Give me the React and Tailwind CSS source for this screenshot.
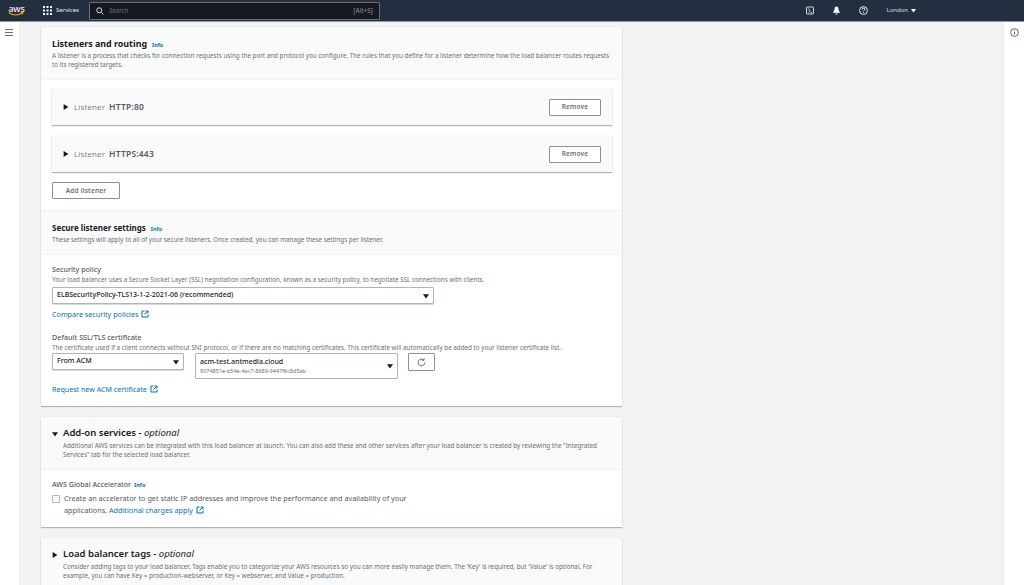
import React from "react";

const ExtIcon = () => (
  <svg viewBox="0 0 16 16" className="w-[8px] h-[8px] inline-block ml-[3px] align-[-1px]" fill="none" stroke="#0073bb" strokeWidth="2">
    <path d="M7 2H2v12h12V9" />
    <path d="M9 2h5v5M14 2L7 9" />
  </svg>
);
const Caret = ({ down }) => (
  <svg viewBox="0 0 10 10" className="w-[6px] h-[6px] shrink-0" fill="#16191f">
    {down ? <path d="M0 2h10L5 9z" /> : <path d="M1 0l8 5-8 5z" />}
  </svg>
);
const Info = () => <span className="text-[5.5px] font-bold text-[#0073bb] ml-[5px]">Info</span>;
const Btn = ({ children, className }) => (
  <div className={"border border-[#879596] rounded-[1px] bg-white flex items-center justify-center text-[6.5px] font-semibold text-[#687078] tracking-[0.2px] " + className}>
    {children}
  </div>
);
const Select = ({ children, className }) => (
  <div className={"border border-[#aab7b8] rounded-[1px] bg-white shadow-[0_1px_0_#d5dbdb] flex items-center justify-between pl-[4px] pr-[4px] text-[#16191f] " + className}>
    <div>{children}</div>
    <Caret down />
  </div>
);
const Listener = ({ name }) => (
  <div className="h-[36px] ml-[11px] mr-[10px] mb-[11px] bg-[#fafafa] shadow-[0_1px_1px_#aab7b8,0_0_1px_#d5dbdb] flex items-center pl-[11px] pr-[11px]">
    <Caret />
    <span className="text-[7.800px] text-[#7a8288] ml-[5px] tracking-[0.2px] pt-[1px]">Listener</span>
    <span className="text-[8.500px] font-semibold text-[#545b64] ml-[4px] tracking-[0.2px] pt-[1px]">{name}</span>
    <Btn className="ml-auto w-[52px] h-[17px]">Remove</Btn>
  </div>
);
const Card = ({ children, className }) => (
  <div className={"w-[581px] bg-white shadow-[0_1px_1px_#aab7b8,0_0_1px_#d5dbdb] " + className}>{children}</div>
);

export default function App() {
  return (
    <div className="w-[1024px] h-[585px] overflow-hidden flex flex-col bg-[#f2f3f3] text-[#16191f]" style={{ fontFamily: '"Noto Sans", sans-serif' }}>
      <header className="h-[22px] shrink-0 bg-[#232f3e] border-b border-[#8d99a8] flex items-center text-white">
        <div className="w-[33px] flex flex-col items-center">
          <span className="text-[9px] font-medium leading-[7px] tracking-[-0.2px] text-[#eaeded]">aws</span>
          <svg viewBox="0 0 20 5" className="w-[16px] h-[4px] -ml-[1px]" fill="none" stroke="#ff9900" strokeWidth="1.3"><path d="M1 1c5 3.500 12 3.500 17 0" /><path d="M16 .8l2.600-.2-.6 2.400" /></svg>
        </div>
        <svg viewBox="0 0 9 9" className="w-[9px] h-[9px] ml-[10px]" fill="#fff">
          <path d="M0 0h2v2H0zM3.500 0h2v2h-2zM7 0h2v2H7zM0 3.500h2v2H0zM3.500 3.500h2v2h-2zM7 3.500h2v2H7zM0 7h2v2H0zM3.500 7h2v2h-2zM7 7h2v2H7z" />
        </svg>
        <span className="text-[6px] ml-[4px] text-[#eaeded] w-[28px]">Services</span>
        <div className="w-[291px] h-[18px] ml-[5px] bg-[#16191f] border border-[#687078] rounded-[1px] flex items-center px-[6px]">
          <svg viewBox="0 0 16 16" className="w-[8px] h-[8px]" fill="none" stroke="#eaeded" strokeWidth="1.800"><circle cx="6.500" cy="6.500" r="5" /><path d="M10.500 10.500L15 15" /></svg>
          <span className="text-[6.500px] text-[#687078] italic ml-[5px]">Search</span>
          <span className="text-[6.500px] text-[#879596] ml-auto">[Alt+S]</span>
        </div>
        <div className="ml-auto flex items-center mr-[108px] h-full">
          <div className="w-[27px] flex items-center justify-center">
            <svg viewBox="0 0 16 16" className="w-[8px] h-[9px]" fill="none" stroke="#fff" strokeWidth="1.600"><rect x="1" y="1" width="14" height="14" rx="1" /><path d="M5 4l3 4-3 4M9 12h3" /></svg>
          </div>
          <div className="w-[27px] flex items-center justify-center">
            <svg viewBox="0 0 16 16" className="w-[9px] h-[9px]" fill="#fff"><path d="M8 1c2.500 0 3.500 2 3.500 4.500 0 3 2.500 5 3 6.500H1.500c.5-1.500 3-3.500 3-6.500C4.500 3 5.500 1 8 1zM6 13.500h4a2 2 0 01-4 0z" /></svg>
          </div>
          <div className="w-[27px] flex items-center justify-center">
            <svg viewBox="0 0 16 16" className="w-[9px] h-[9px]" fill="none" stroke="#fff" strokeWidth="1.600"><circle cx="8" cy="8" r="7" /><path d="M5.800 6a2.200 2.200 0 114 1.200c-.8.8-1.800 1-1.800 2.300M8 11v1.500" /></svg>
          </div>
          <div className="flex items-center ml-[9px] text-[6px] text-[#d5dbdb]">
            London
            <svg viewBox="0 0 10 10" className="w-[5px] h-[5px] ml-[3px]" fill="#fff"><path d="M0 2h10L5 9z" /></svg>
          </div>
        </div>
      </header>
      <div className="flex flex-1 min-h-0">
        <aside className="w-[20px] shrink-0 bg-white border-r border-[#eaeded] flex justify-start pl-[5px] pt-[7px]">
          <svg viewBox="0 0 8 7" className="w-[8px] h-[7px]" fill="none" stroke="#687078" strokeWidth="1"><path d="M0 .5h8M0 3.500h8M0 6.500h8" /></svg>
        </aside>
        <main className="flex-1 pl-[21px] pt-[5px] flex flex-col gap-[11px] min-w-0">
          <Card className="shrink-0">
            <div className="h-[53px] bg-[#fafafa] border-b border-[#f2f3f3] px-[11px] pt-[10px]">
              <div className="flex items-baseline leading-[13px]">
                <span className="text-[8.900px] font-bold">Listeners and routing</span><Info />
              </div>
              <p className="text-[6.270px] leading-[9px] text-[#687078] -mt-[1px]">
                A listener is a process that checks for connection requests using the port and protocol you configure. The rules that you define for a listener determine how the load balancer routes requests to its registered targets.
              </p>
            </div>
            <div className="pt-[9px]">
              <Listener name="HTTP:80" />
              <Listener name="HTTPS:443" />
              <Btn className="ml-[11px] w-[68px] h-[17px] -mt-[1px]">Add listener</Btn>
            </div>
            <div className="mt-[11px] h-[45px] bg-[#fafafa] border-y border-[#f2f3f3] px-[11px] pt-[10px]">
              <div className="flex items-baseline leading-[13px]">
                <span className="text-[8px] font-bold">Secure listener settings</span><Info />
              </div>
              <p className="text-[6.270px] leading-[9px] text-[#687078] -mt-[1px]">
                These settings will apply to all of your secure listeners. Once created, you can manage these settings per listener.
              </p>
            </div>
            <div className="px-[11px] pt-[9px] pb-[12px]">
              <div className="text-[7.100px] leading-[10px] font-medium text-[#545b64]">Security policy</div>
              <div className="text-[6.270px] leading-[9px] text-[#687078] mt-[1px]">
                Your load balancer uses a Secure Socket Layer (SSL) negotiation configuration, known as a security policy, to negotiate SSL connections with clients.
              </div>
              <Select className="w-[382px] h-[17px] mt-[3px] font-medium text-[7px]">ELBSecurityPolicy-TLS13-1-2-2021-06 (recommended)</Select>
              <div className="text-[7.200px] leading-[10px] text-[#0073bb] mt-[5px]">Compare security policies<ExtIcon /></div>
              <div className="text-[7.200px] leading-[10px] font-medium text-[#545b64] mt-[13px]">Default SSL/TLS certificate</div>
              <div className="text-[6.270px] leading-[9px] text-[#687078] mt-[1px]">
                The certificate used if a client connects without SNI protocol, or if there are no matching certificates. This certificate will automatically be added to your listener certificate list.
              </div>
              <div className="flex items-start mt-[1px]">
                <Select className="w-[132px] h-[17px] font-medium text-[7px]">From ACM</Select>
                <Select className="w-[203px] h-[26px] ml-[11px] !shadow-none">
                  <div className="font-medium text-[7px] leading-[10px] -mt-[1px]">acm-test.antmedia.cloud</div>
                  <div className="text-[5.500px] leading-[8px] text-[#687078]">9074851e-b54e-4ac7-8689-9447f6c8d5ab</div>
                </Select>
                <div className="ml-[10px] w-[27px] h-[18px] border border-[#879596] rounded-[1px] bg-white flex items-center justify-center">
                  <svg viewBox="0 0 16 16" className="w-[9px] h-[9px]" fill="none" stroke="#545b64" strokeWidth="1.600"><path d="M14 8a6 6 0 11-2-4.500" /><path d="M12.500 .5v3.500H9" /></svg>
                </div>
              </div>
              <div className="text-[7.100px] leading-[10px] text-[#0073bb] mt-[5px]">Request new ACM certificate<ExtIcon /></div>
            </div>
          </Card>
          <Card className="shrink-0">
            <div className="h-[53px] bg-[#fafafa] border-b border-[#f2f3f3] px-[11px] pt-[9px] flex">
              <div className="w-[11px] pt-[5px] shrink-0"><Caret down /></div>
              <div>
                <div className="text-[9.500px] font-semibold leading-[13px]">Add-on services - <span className="font-normal italic">optional</span></div>
                <p className="text-[6.270px] leading-[9px] text-[#687078] mt-[2px]">
                  Additional AWS services can be integrated with this load balancer at launch. You can also add these and other services after your load balancer is created by reviewing the "Integrated Services" tab for the selected load balancer.
                </p>
              </div>
            </div>
            <div className="px-[11px] pt-[9px] h-[57px]">
              <div className="text-[7.100px] leading-[10px] font-medium text-[#545b64] flex items-baseline">AWS Global Accelerator<span className="text-[5.500px] font-bold text-[#0073bb] ml-[3px]">Info</span></div>
              <div className="flex mt-[2px]">
                <div className="w-[8px] h-[8px] border border-[#aab7b8] rounded-[1px] mt-[3px] shrink-0" />
                <div className="text-[7.250px] leading-[12px] text-[#545b64] ml-[4px] w-[350px]">
                  Create an accelerator to get static IP addresses and improve the performance and availability of your applications. <span className="text-[#0073bb]">Additional charges apply<ExtIcon /></span>
                </div>
              </div>
            </div>
          </Card>
          <Card className="shrink-0">
            <div className="h-[53px] bg-[#fafafa] px-[11px] pt-[9px] flex">
              <div className="w-[11px] pt-[5px] shrink-0"><Caret /></div>
              <div>
                <div className="text-[9.500px] font-semibold leading-[13px]">Load balancer tags - <span className="font-normal italic">optional</span></div>
                <p className="text-[6.270px] leading-[9px] text-[#687078] mt-[2px]">
                  Consider adding tags to your load balancer. Tags enable you to categorize your AWS resources so you can more easily manage them. The 'Key' is required, but 'Value' is optional. For example, you can have Key = production-webserver, or Key = webserver, and Value = production.
                </p>
              </div>
            </div>
          </Card>
        </main>
        <aside className="w-[21px] shrink-0 bg-white border-l border-[#eaeded] flex justify-center pt-[6px]">
          <svg viewBox="0 0 16 16" className="w-[9px] h-[9px]" fill="none" stroke="#545b64" strokeWidth="1.600"><circle cx="8" cy="8" r="7" /><path d="M8 7v5M8 3.500v2" /></svg>
        </aside>
      </div>
    </div>
  );
}
